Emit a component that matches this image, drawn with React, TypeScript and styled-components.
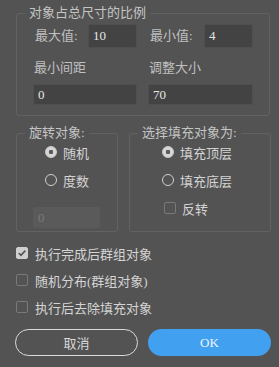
import * as React from 'react'
import styled, { createGlobalStyle } from 'styled-components'

const GlobalStyle = createGlobalStyle`
  html, body {
    margin: 0;
    padding: 0;
    background: #535353;
  }
  body {
    font-family: "Liberation Serif", "Noto Sans CJK SC", serif;
    font-size: 13px;
    color: #cfcfcf;
  }
`

const App = () => {
  return (
    <Panel>
      <GlobalStyle />
      <Group>
        <Legend>对象占总尺寸的比例</Legend>
        <SizeGrid>
          <InlineField>
            <Label>最大值:</Label>
            <TextBox width={49} height={24} defaultValue="10" />
          </InlineField>
          <InlineField>
            <Label>最小值:</Label>
            <TextBox width={49} height={24} defaultValue="4" />
          </InlineField>
          <Label spaced>最小间距</Label>
          <Label spaced>调整大小</Label>
          <TextBox height={21} defaultValue="0" />
          <TextBox height={21} defaultValue="70" />
        </SizeGrid>
      </Group>

      <Columns>
        <SmallGroup width={102}>
          <Legend>旋转对象:</Legend>
          <OptionRow indent={12}>
            <Radio checked />
            <span>随机</span>
          </OptionRow>
          <OptionRow indent={12}>
            <Radio />
            <span>度数</span>
          </OptionRow>
          <TextBox width={67} height={21} disabled defaultValue="0" style={{ marginTop: 10 }} />
        </SmallGroup>
        <SmallGroup width={142}>
          <Legend>选择填充对象为:</Legend>
          <OptionRow indent={16}>
            <Radio checked />
            <span>填充顶层</span>
          </OptionRow>
          <OptionRow indent={16}>
            <Radio />
            <span>填充底层</span>
          </OptionRow>
          <OptionRow indent={18} short>
            <Check />
            <span>反转</span>
          </OptionRow>
        </SmallGroup>
      </Columns>

      <Checks>
        <CheckRow>
          <Check checked />
          <span>执行完成后群组对象</span>
        </CheckRow>
        <CheckRow>
          <Check />
          <span>随机分布(群组对象)</span>
        </CheckRow>
        <CheckRow>
          <Check />
          <span>执行后去除填充对象</span>
        </CheckRow>
      </Checks>

      <Buttons>
        <Button>取消</Button>
        <Button primary>OK</Button>
      </Buttons>
    </Panel>
  )
}

const Radio = ({ checked }: { checked?: boolean }) => (
  <RadioDot checked={checked} />
)

const Check = ({ checked }: { checked?: boolean }) => (
  <CheckBox checked={checked}>
    {checked ? (
      <svg width="10" height="10" viewBox="0 0 10 10">
        <path d="M1.8 5.2 L4 7.3 L8.3 2.6" fill="none" stroke="#555" strokeWidth="1.6" />
      </svg>
    ) : null}
  </CheckBox>
)

const Panel = styled.div`
  width: 279px;
  height: 367px;
  box-sizing: border-box;
  padding: 5px 8px 0 16px;
  display: flex;
  flex-direction: column;
`

const Group = styled.fieldset`
  margin: 0;
  width: 254px;
  box-sizing: border-box;
  border: 1px solid #626262;
  border-radius: 3px;
  padding: 3px 16px 10px 16px;
`

const Legend = styled.legend`
  margin-left: -8px;
  padding: 0 4px;
  line-height: 16px;
  font-size: 13px;
  color: #c4c4c4;
  white-space: nowrap;
`

const SizeGrid = styled.div`
  display: grid;
  grid-template-columns: 104px 105px;
  column-gap: 11px;
  align-items: center;
  & > input {
    margin-top: 8px;
  }
`

const InlineField = styled.div`
  display: flex;
  align-items: center;
  justify-content: space-between;
  padding-left: 1px;
`

const Label = styled.span<{ spaced?: boolean }>`
  color: #c0c0c0;
  line-height: 16px;
  padding-left: 1px;
  margin-top: ${p => (p.spaced ? 12 : 0)}px;
`

const TextBox = styled.input<{ width?: number; height: number }>`
  box-sizing: border-box;
  width: ${p => (p.width ? `${p.width}px` : '100%')};
  height: ${p => p.height}px;
  margin: 0;
  padding: 0 4px;
  background: #434343;
  border: 1px solid #4f4f4f;
  border-radius: 2px;
  color: #e6e6e6;
  font-family: "Liberation Serif", serif;
  font-size: 13px;
  outline: none;
  &:disabled {
    background: #5a5a5a;
    border-color: #5a5a5a;
    color: #7a7a7a;
  }
`

const Columns = styled.div`
  display: flex;
  gap: 11px;
  margin-top: 9px;
`

const SmallGroup = styled.fieldset<{ width: number }>`
  margin: 0;
  width: ${p => p.width}px;
  height: 107px;
  box-sizing: border-box;
  border: 1px solid #626262;
  border-radius: 3px;
  padding: 0 16px;
  display: flex;
  flex-direction: column;
`

const OptionRow = styled.div<{ indent: number; short?: boolean }>`
  display: flex;
  align-items: center;
  gap: 6px;
  height: 22px;
  margin-bottom: ${p => (p.short ? 0 : 6)}px;
  margin-left: ${p => p.indent}px;
  color: #d4d4d4;
  white-space: nowrap;
`

const RadioDot = styled.span<{ checked?: boolean }>`
  width: 12px;
  height: 12px;
  box-sizing: border-box;
  border-radius: 50%;
  flex: none;
  border: 1.5px solid #d0d0d0;
  background: ${p => (p.checked ? 'radial-gradient(circle, #5a5a5a 0 2px, #d6d6d6 2.5px)' : 'transparent')};
`

const CheckBox = styled.span<{ checked?: boolean }>`
  width: 12px;
  height: 12px;
  box-sizing: border-box;
  border-radius: 2px;
  flex: none;
  display: flex;
  align-items: center;
  justify-content: center;
  border: 1px solid ${p => (p.checked ? '#cfcfcf' : '#7a7a7a')};
  background: ${p => (p.checked ? '#cfcfcf' : 'transparent')};
`

const Checks = styled.div`
  display: flex;
  flex-direction: column;
  gap: 11px;
  margin-top: 13px;
`

const CheckRow = styled.div`
  display: flex;
  align-items: center;
  gap: 7px;
  height: 16px;
  color: #d4d4d4;
`

const Buttons = styled.div`
  display: flex;
  gap: 10px;
  margin-top: 14px;
  margin-left: -1px;
`

const Button = styled.button<{ primary?: boolean }>`
  width: 123px;
  height: 27px;
  box-sizing: border-box;
  border-radius: 14px;
  font-family: "Liberation Serif", "Noto Sans CJK SC", serif;
  font-size: 13px;
  border: ${p => (p.primary ? 'none' : '1.5px solid #dcdcdc')};
  background: ${p => (p.primary ? '#42a0f0' : 'transparent')};
  color: ${p => (p.primary ? '#eef6ff' : '#d8d8d8')};
  padding: 0;
`

export default App
